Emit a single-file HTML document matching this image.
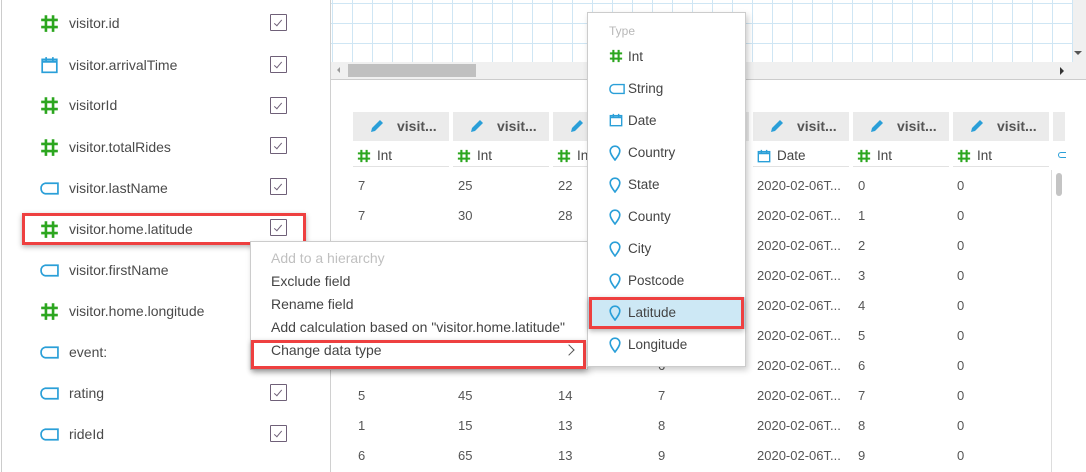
<!DOCTYPE html>
<html><head><meta charset="utf-8"><style>
*{margin:0;padding:0;box-sizing:border-box}
body{width:1086px;height:472px;overflow:hidden;background:#fff;font-family:"Liberation Sans",sans-serif;font-size:13px;color:#444;position:relative}
.a{position:absolute}
.f{position:absolute;left:40px;height:20px;display:flex;align-items:center}
.f span{position:absolute;left:29px;font-size:14px;white-space:nowrap;color:#4a4a4a}
.cb{position:absolute;left:270px;width:17px;height:17px;border:1px solid #6f6078;border-radius:1px}
.cb:after{content:"";position:absolute;left:5px;top:3px;width:3px;height:7px;border:solid #6f6078;border-width:0 1px 1px 0;transform:rotate(40deg)}
.hd{position:absolute;top:112px;width:96px;height:29px;background:#ebebeb;font-weight:bold;font-size:14px;color:#555}
.hd svg{position:absolute;left:16px;top:6px}
.hd span{position:absolute;left:44px;top:6px}
.ty{position:absolute;top:147px;width:96px;height:20px;border-bottom:1px solid #e2e2e2;font-size:13.5px}
.ty svg{position:absolute;left:4px;top:2px}
.ty span{position:absolute;left:24px;top:1px}
.c{position:absolute;font-size:13px;color:#555;white-space:nowrap}
.mi{position:absolute;left:20px;font-size:14px;color:#444;white-space:nowrap}
.si{position:absolute;left:0;width:157px;height:32px}
.si svg{position:absolute;left:21px;top:8px}
.si span{position:absolute;left:40px;top:8px;font-size:13.5px;color:#444}
</style></head><body>
<div class="a" style="left:1px;top:0;width:1px;height:472px;background:#ccc"></div>
<div class="a" style="left:330px;top:0;width:1px;height:472px;background:#d0d0d0"></div>
<div class="a" style="left:331px;top:0;width:742px;height:62px;background-color:#fff;background-image:linear-gradient(#cfe6f4 1px,transparent 1px),linear-gradient(90deg,#cfe6f4 1px,transparent 1px);background-size:20px 20px;background-position:0 3px,1px 0"></div>
<div class="a" style="left:1073px;top:0;width:13px;height:80px;background:#f0f0f0"></div>
<div class="a" style="left:1074px;top:51px;width:0;height:0;border-left:4px solid transparent;border-right:4px solid transparent;border-top:4px solid #555"></div>
<div class="a" style="left:331px;top:62px;width:742px;height:17px;background:#f0f0f0"></div>
<div class="a" style="left:348px;top:64px;width:128px;height:13px;background:#c0c0c0"></div>
<div class="a" style="left:337px;top:67px;width:0;height:0;border-top:3px solid transparent;border-bottom:3px solid transparent;border-right:3px solid #999"></div>
<div class="a" style="left:1060px;top:67px;width:0;height:0;border-top:4px solid transparent;border-bottom:4px solid transparent;border-left:4px solid #333"></div>
<div class="a" style="left:331px;top:79px;width:755px;height:1px;background:#ccc"></div>

<div class="f" style="top:13px"><svg width="19" height="19" viewBox="0 0 16 16"><path d="M5 1v14M11 1v14M1 5h14M1 11h14" stroke="#2ca61f" stroke-width="2.2"/></svg><span>visitor.id</span></div><div class="cb" style="top:14px"></div>
<div class="f" style="top:55px"><svg width="19" height="18" viewBox="0 0 16 16"><rect x="1.5" y="3" width="13" height="11.5" fill="none" stroke="#2a9fd8" stroke-width="1.5"/><path d="M1.5 5h13" stroke="#2a9fd8" stroke-width="2"/><path d="M5 1v3M11 1v3" stroke="#2a9fd8" stroke-width="1.5"/></svg><span>visitor.arrivalTime</span></div><div class="cb" style="top:56px"></div>
<div class="f" style="top:95px"><svg width="19" height="19" viewBox="0 0 16 16"><path d="M5 1v14M11 1v14M1 5h14M1 11h14" stroke="#2ca61f" stroke-width="2.2"/></svg><span>visitorId</span></div><div class="cb" style="top:97px"></div>
<div class="f" style="top:137px"><svg width="19" height="19" viewBox="0 0 16 16"><path d="M5 1v14M11 1v14M1 5h14M1 11h14" stroke="#2ca61f" stroke-width="2.2"/></svg><span>visitor.totalRides</span></div><div class="cb" style="top:137px"></div>
<div class="f" style="top:178px"><svg width="19" height="13" viewBox="0 0 18 12"><path d="M5 1h12v10H5Q1 10 1 6T5 1z" fill="none" stroke="#2a9fd8" stroke-width="1.6"/></svg><span>visitor.lastName</span></div><div class="cb" style="top:178px"></div>
<div class="f" style="top:219px"><svg width="19" height="19" viewBox="0 0 16 16"><path d="M5 1v14M11 1v14M1 5h14M1 11h14" stroke="#2ca61f" stroke-width="2.2"/></svg><span>visitor.home.latitude</span></div><div class="cb" style="top:219px"></div>
<div class="f" style="top:260px"><svg width="19" height="13" viewBox="0 0 18 12"><path d="M5 1h12v10H5Q1 10 1 6T5 1z" fill="none" stroke="#2a9fd8" stroke-width="1.6"/></svg><span>visitor.firstName</span></div>
<div class="f" style="top:301px"><svg width="19" height="19" viewBox="0 0 16 16"><path d="M5 1v14M11 1v14M1 5h14M1 11h14" stroke="#2ca61f" stroke-width="2.2"/></svg><span>visitor.home.longitude</span></div>
<div class="f" style="top:342px"><svg width="19" height="13" viewBox="0 0 18 12"><path d="M5 1h12v10H5Q1 10 1 6T5 1z" fill="none" stroke="#2a9fd8" stroke-width="1.6"/></svg><span>event:</span></div>
<div class="f" style="top:383px"><svg width="19" height="13" viewBox="0 0 18 12"><path d="M5 1h12v10H5Q1 10 1 6T5 1z" fill="none" stroke="#2a9fd8" stroke-width="1.6"/></svg><span>rating</span></div><div class="cb" style="top:384px"></div>
<div class="f" style="top:424px"><svg width="19" height="13" viewBox="0 0 18 12"><path d="M5 1h12v10H5Q1 10 1 6T5 1z" fill="none" stroke="#2a9fd8" stroke-width="1.6"/></svg><span>rideId</span></div><div class="cb" style="top:425px"></div>
<div class="a" style="left:22px;top:213px;width:284px;height:32px;border:3px solid #ee4040;box-shadow:0 2px 5px rgba(0,0,0,.3)"></div>

<div class="hd" style="left:353px"><svg width="16" height="16" viewBox="0 0 16 16"><path d="M2 14l1-4 8-8 3 3-8 8z" fill="#2a9fd8"/></svg><span>visit...</span></div>
<div class="hd" style="left:453px"><svg width="16" height="16" viewBox="0 0 16 16"><path d="M2 14l1-4 8-8 3 3-8 8z" fill="#2a9fd8"/></svg><span>visit...</span></div>
<div class="hd" style="left:553px"><svg width="16" height="16" viewBox="0 0 16 16"><path d="M2 14l1-4 8-8 3 3-8 8z" fill="#2a9fd8"/></svg><span>visit...</span></div>
<div class="hd" style="left:653px"></div>
<div class="hd" style="left:753px"><svg width="16" height="16" viewBox="0 0 16 16"><path d="M2 14l1-4 8-8 3 3-8 8z" fill="#2a9fd8"/></svg><span>visit...</span></div>
<div class="hd" style="left:853px"><svg width="16" height="16" viewBox="0 0 16 16"><path d="M2 14l1-4 8-8 3 3-8 8z" fill="#2a9fd8"/></svg><span>visit...</span></div>
<div class="hd" style="left:953px"><svg width="16" height="16" viewBox="0 0 16 16"><path d="M2 14l1-4 8-8 3 3-8 8z" fill="#2a9fd8"/></svg><span>visit...</span></div>
<div class="hd" style="left:1053px;width:12px"></div>
<div class="ty" style="left:353px"><svg width="14" height="14" viewBox="0 0 16 16"><path d="M5 1v14M11 1v14M1 5h14M1 11h14" stroke="#2ca61f" stroke-width="2.4"/></svg><span>Int</span></div>
<div class="ty" style="left:453px"><svg width="14" height="14" viewBox="0 0 16 16"><path d="M5 1v14M11 1v14M1 5h14M1 11h14" stroke="#2ca61f" stroke-width="2.4"/></svg><span>Int</span></div>
<div class="ty" style="left:553px"><svg width="14" height="14" viewBox="0 0 16 16"><path d="M5 1v14M11 1v14M1 5h14M1 11h14" stroke="#2ca61f" stroke-width="2.4"/></svg><span>Int</span></div>
<div class="ty" style="left:753px"><svg width="14" height="14" viewBox="0 0 16 16"><rect x="1.5" y="3" width="13" height="11.5" fill="none" stroke="#2a9fd8" stroke-width="1.6"/><path d="M1.5 5h13" stroke="#2a9fd8" stroke-width="2"/><path d="M5 1v3M11 1v3" stroke="#2a9fd8" stroke-width="1.6"/></svg><span>Date</span></div>
<div class="ty" style="left:853px"><svg width="14" height="14" viewBox="0 0 16 16"><path d="M5 1v14M11 1v14M1 5h14M1 11h14" stroke="#2ca61f" stroke-width="2.4"/></svg><span>Int</span></div>
<div class="ty" style="left:953px"><svg width="14" height="14" viewBox="0 0 16 16"><path d="M5 1v14M11 1v14M1 5h14M1 11h14" stroke="#2ca61f" stroke-width="2.4"/></svg><span>Int</span></div>
<div class="a" style="left:1058px;top:152px;width:8px;height:6px;border:1.5px solid #2a9fd8;border-right:none;border-radius:3px 0 0 3px"></div>
<div class="a" style="left:1051px;top:170px;width:1px;height:302px;background:#ddd"></div>
<div class="a" style="left:1056px;top:173px;width:6px;height:23px;background:#c4c4c4;border-radius:3px"></div>

<div class="c" style="left:358px;top:178px">7</div><div class="c" style="left:458px;top:178px">25</div><div class="c" style="left:558px;top:178px">22</div><div class="c" style="left:757px;top:178px">2020-02-06T...</div><div class="c" style="left:858px;top:178px">0</div><div class="c" style="left:957px;top:178px">0</div>
<div class="c" style="left:358px;top:208px">7</div><div class="c" style="left:458px;top:208px">30</div><div class="c" style="left:558px;top:208px">28</div><div class="c" style="left:757px;top:208px">2020-02-06T...</div><div class="c" style="left:858px;top:208px">1</div><div class="c" style="left:957px;top:208px">0</div>
<div class="c" style="left:757px;top:238px">2020-02-06T...</div><div class="c" style="left:858px;top:238px">2</div><div class="c" style="left:957px;top:238px">0</div>
<div class="c" style="left:757px;top:268px">2020-02-06T...</div><div class="c" style="left:858px;top:268px">3</div><div class="c" style="left:957px;top:268px">0</div>
<div class="c" style="left:757px;top:298px">2020-02-06T...</div><div class="c" style="left:858px;top:298px">4</div><div class="c" style="left:957px;top:298px">0</div>
<div class="c" style="left:757px;top:328px">2020-02-06T...</div><div class="c" style="left:858px;top:328px">5</div><div class="c" style="left:957px;top:328px">0</div>
<div class="c" style="left:658px;top:358px">6</div><div class="c" style="left:757px;top:358px">2020-02-06T...</div><div class="c" style="left:858px;top:358px">6</div><div class="c" style="left:957px;top:358px">0</div>
<div class="c" style="left:358px;top:388px">5</div><div class="c" style="left:458px;top:388px">45</div><div class="c" style="left:558px;top:388px">14</div><div class="c" style="left:658px;top:388px">7</div><div class="c" style="left:757px;top:388px">2020-02-06T...</div><div class="c" style="left:858px;top:388px">7</div><div class="c" style="left:957px;top:388px">0</div>
<div class="c" style="left:358px;top:418px">1</div><div class="c" style="left:458px;top:418px">15</div><div class="c" style="left:558px;top:418px">13</div><div class="c" style="left:658px;top:418px">8</div><div class="c" style="left:757px;top:418px">2020-02-06T...</div><div class="c" style="left:858px;top:418px">8</div><div class="c" style="left:957px;top:418px">0</div>
<div class="c" style="left:358px;top:448px">6</div><div class="c" style="left:458px;top:448px">65</div><div class="c" style="left:558px;top:448px">13</div><div class="c" style="left:658px;top:448px">9</div><div class="c" style="left:757px;top:448px">2020-02-06T...</div><div class="c" style="left:858px;top:448px">9</div><div class="c" style="left:957px;top:448px">0</div>

<div class="a" style="left:250px;top:241px;width:338px;height:129px;background:#fff;border:1px solid #ccc;box-shadow:2px 3px 6px rgba(0,0,0,.2)">
<div class="mi" style="top:8px;color:#c0c0c0">Add to a hierarchy</div>
<div class="mi" style="top:31px">Exclude field</div>
<div class="mi" style="top:54px">Rename field</div>
<div class="mi" style="top:77px">Add calculation based on "visitor.home.latitude"</div>
<div class="mi" style="top:100px">Change data type</div>
<div class="a" style="left:314px;top:104px;width:8px;height:8px;border:solid #555;border-width:1px 1px 0 0;transform:rotate(45deg)"></div>
</div>
<div class="a" style="left:251px;top:340px;width:335px;height:29px;border:3px solid #ee4040;box-shadow:0 2px 5px rgba(0,0,0,.3)"></div>

<div class="a" style="left:587px;top:12px;width:159px;height:355px;background:#fff;border:1px solid #ccc;box-shadow:2px 3px 6px rgba(0,0,0,.2)">
<div class="a" style="left:21px;top:11px;font-size:12px;color:#b8b8b8">Type</div>
<div class="si" style="top:28px"><svg width="14" height="14" viewBox="0 0 16 16"><path d="M5 1v14M11 1v14M1 5h14M1 11h14" stroke="#2ca61f" stroke-width="2.4"/></svg><span>Int</span></div>
<div class="si" style="top:60px"><svg width="16" height="12" viewBox="0 0 18 12" style="top:10px"><path d="M5 1h12v10H5Q1 10 1 6T5 1z" fill="none" stroke="#2a9fd8" stroke-width="1.6"/></svg><span>String</span></div>
<div class="si" style="top:92px"><svg width="14" height="14" viewBox="0 0 16 16"><rect x="1.5" y="3" width="13" height="11.5" fill="none" stroke="#2a9fd8" stroke-width="1.6"/><path d="M1.5 5h13" stroke="#2a9fd8" stroke-width="2"/><path d="M5 1v3M11 1v3" stroke="#2a9fd8" stroke-width="1.6"/></svg><span>Date</span></div>
<div class="si" style="top:124px"><svg width="12" height="16" viewBox="0 0 12 16"><path d="M6 15C3 11 1.2 8.5 1.2 6a4.8 4.8 0 0 1 9.6 0c0 2.5-1.8 5-4.8 9z" fill="none" stroke="#2a9fd8" stroke-width="1.6"/></svg><span>Country</span></div>
<div class="si" style="top:156px"><svg width="12" height="16" viewBox="0 0 12 16"><path d="M6 15C3 11 1.2 8.5 1.2 6a4.8 4.8 0 0 1 9.6 0c0 2.5-1.8 5-4.8 9z" fill="none" stroke="#2a9fd8" stroke-width="1.6"/></svg><span>State</span></div>
<div class="si" style="top:188px"><svg width="12" height="16" viewBox="0 0 12 16"><path d="M6 15C3 11 1.2 8.5 1.2 6a4.8 4.8 0 0 1 9.6 0c0 2.5-1.8 5-4.8 9z" fill="none" stroke="#2a9fd8" stroke-width="1.6"/></svg><span>County</span></div>
<div class="si" style="top:220px"><svg width="12" height="16" viewBox="0 0 12 16"><path d="M6 15C3 11 1.2 8.5 1.2 6a4.8 4.8 0 0 1 9.6 0c0 2.5-1.8 5-4.8 9z" fill="none" stroke="#2a9fd8" stroke-width="1.6"/></svg><span>City</span></div>
<div class="si" style="top:252px"><svg width="12" height="16" viewBox="0 0 12 16"><path d="M6 15C3 11 1.2 8.5 1.2 6a4.8 4.8 0 0 1 9.6 0c0 2.5-1.8 5-4.8 9z" fill="none" stroke="#2a9fd8" stroke-width="1.6"/></svg><span>Postcode</span></div>
<div class="si" style="top:284px;background:#cde8f5"><svg width="12" height="16" viewBox="0 0 12 16"><path d="M6 15C3 11 1.2 8.5 1.2 6a4.8 4.8 0 0 1 9.6 0c0 2.5-1.8 5-4.8 9z" fill="none" stroke="#2a9fd8" stroke-width="1.6"/></svg><span>Latitude</span></div>
<div class="si" style="top:316px"><svg width="12" height="16" viewBox="0 0 12 16"><path d="M6 15C3 11 1.2 8.5 1.2 6a4.8 4.8 0 0 1 9.6 0c0 2.5-1.8 5-4.8 9z" fill="none" stroke="#2a9fd8" stroke-width="1.6"/></svg><span>Longitude</span></div>
</div>
<div class="a" style="left:589px;top:297px;width:155px;height:32px;border:3px solid #ee4040;box-shadow:0 2px 5px rgba(0,0,0,.3)"></div>
</body></html>
